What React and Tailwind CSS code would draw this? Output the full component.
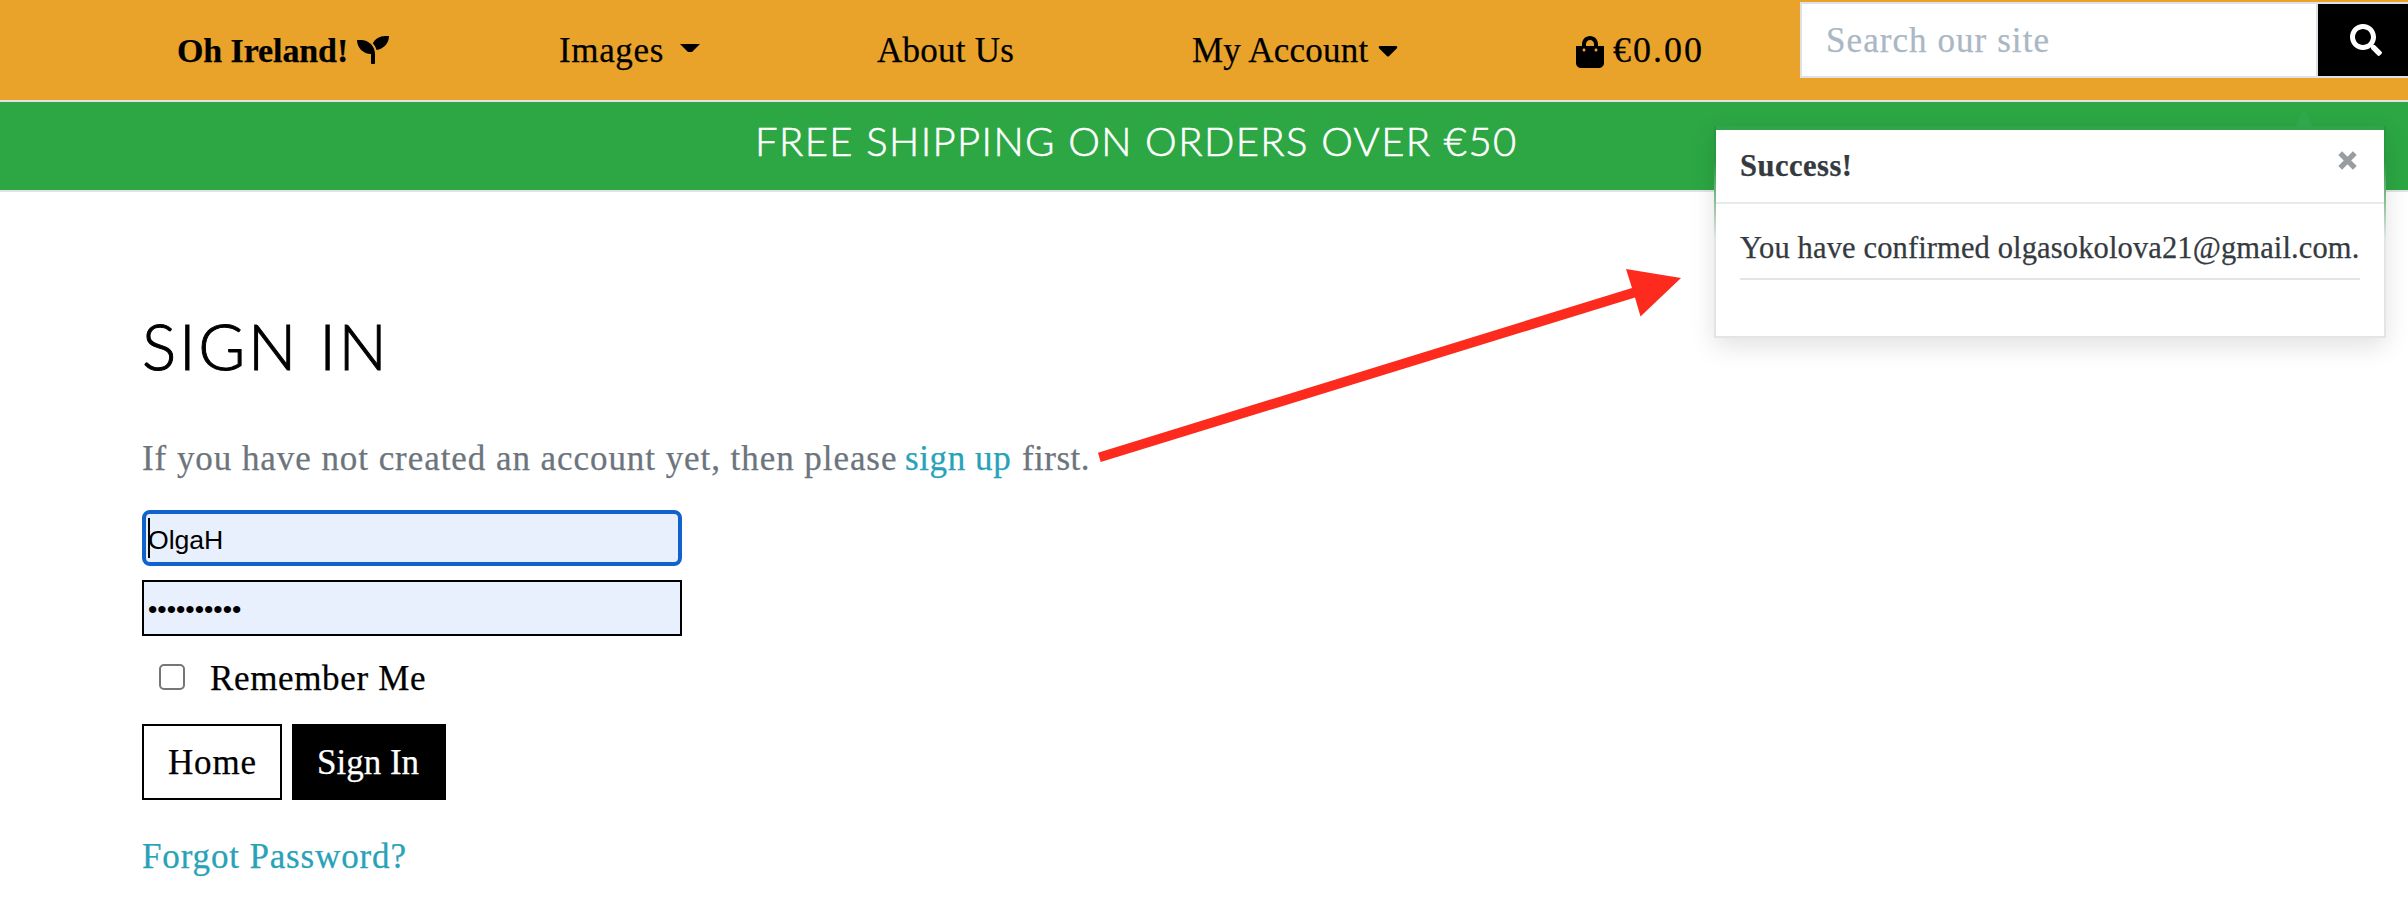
import { FaSeedling, FaShoppingBag, FaCaretDown, FaSearch } from 'react-icons/fa';

function Header() {
  return (
    <header className="flex h-[102px] border-b-2 border-[#e2e3e5] bg-[#e9a32b] text-[35px] leading-[101px] whitespace-nowrap text-black">
      <a className="ml-[177px] flex w-[180px] text-[34px] font-bold tracking-[-0.1px]">Oh Ireland!</a>
      <FaSeedling className="mt-[34px] size-8" />
      <a className="ml-[170px] w-[121px] tracking-[0.65px]">Images</a>
      <svg className="mt-[44px] h-[8px] w-[20px]" viewBox="0 0 20 8">
        <path d="M0 0H20L12 8H8Z" />
      </svg>
      <a className="ml-[177px] w-[137px] tracking-[0.25px]">About Us</a>
      <a className="ml-[178px] w-[186px] tracking-[0.25px]">My Account</a>
      <FaCaretDown className="mt-[34px] h-8 w-5" />
      <FaShoppingBag className="mt-[36px] ml-[178px] h-8 w-7" />
      <a className="ml-[9px] w-[187px] text-[36px] tracking-[2px]">€0.00</a>
      <form className="mt-[2px] flex h-[76px] flex-1 border-2 border-r-0 border-[#dee2e6]">
        <div className="w-[516px] border-r-2 border-[#dee2e6] bg-white pl-[24px] leading-[73px] tracking-[1.07px] text-[#aab7c4]">
          Search our site
        </div>
        <button type="button" aria-label="Search" className="flex flex-1 justify-start bg-black pt-[20px] pl-[32px] text-white">
          <FaSearch className="size-8" />
        </button>
      </form>
    </header>
  );
}

function Toast() {
  return (
    <div className="absolute top-[126px] left-[1714px] h-[212px] w-[672px] bg-[linear-gradient(to_bottom,#28983f_0,#28983f_36px,#e3e4e5_112px)] px-[2px] pb-[2px] leading-none text-[#343a40] shadow-[0_8px_24px_rgba(0,0,0,0.12)]">
      <svg className="absolute -top-[19px] left-[581px] h-[19px] w-[18px]" viewBox="0 0 18 19">
        <path d="M9 0L17 19H1Z" fill="#2fa74b" />
      </svg>
      <div className="h-[4px] bg-[#30a54b]" />
      <div className="flex h-[74px] justify-between border-b-2 border-[#e6ece9] bg-white pl-[24px]">
        <strong className="text-[30.5px] leading-[72px] tracking-[0.5px]">Success!</strong>
        <svg aria-label="Close" className="mt-[21px] mr-[27px] size-[19px]" viewBox="0 0 19 19">
          <path d="M2.2 2.2L16.8 16.8M16.8 2.2L2.2 16.8" stroke="#9a9da0" strokeWidth="5.4" />
        </svg>
      </div>
      <div className="h-[132px] bg-white px-[24px] pt-[22px]">
        <p className="h-[54px] border-b-2 border-[#e4e4e4] text-[30.5px] leading-[44px] tracking-[0.13px] whitespace-nowrap">
          You have confirmed olgasokolova21@gmail.com.
        </p>
      </div>
    </div>
  );
}

export default function App() {
  return (
    <div className="relative h-[912px] w-[2408px] overflow-hidden bg-white font-['Liberation_Serif',serif] [-webkit-text-stroke:0.25px]">
      <Header />
      <div className="h-[90px] border-b-2 border-[#e2e3e5] bg-[#2ca744] pl-[755px] font-['Lato',sans-serif] text-[40px] leading-[79px] font-light tracking-[1.42px] whitespace-nowrap text-white [-webkit-text-stroke:0.6px]">
        FREE SHIPPING ON ORDERS OVER €50
      </div>
      <main className="pt-[114px] pl-[142px] text-[35px] whitespace-nowrap text-black">
        <h1 className="h-[113px] font-['Lato',sans-serif] text-[64px] leading-[79px] font-light tracking-[2.7px] [-webkit-text-stroke:1px]">
          SIGN IN
        </h1>
        <p className="flex h-[91px] leading-[80px] text-[#6c757d]">
          <span className="w-[763px] tracking-[0.94px]">If you have not created an account yet, then please</span>
          <a className="w-[117px] tracking-[0.6px] text-[#27a2b9]">sign up</a>
          <span className="tracking-[0.45px]">first.</span>
        </p>
        <div className="flex h-[56px] w-[540px] rounded-[8px] border-4 border-[#1062cc] bg-[#e8effd] pl-[2px] font-['Liberation_Sans',sans-serif] text-[26.67px] leading-[53px] [-webkit-text-stroke:0]">
          <span className="mt-[4px] h-[40px] w-[2px] bg-black" />
          <span className="-ml-[2px] tracking-[-0.1px]">OlgaH</span>
        </div>
        <div className="mt-[14px] h-[56px] w-[540px] border-2 border-black bg-[#e8effd] pl-[4px] font-['Liberation_Sans',sans-serif] text-[26.67px] leading-[55px] [-webkit-text-stroke:0]">
          ••••••••••
        </div>
        <label className="flex h-[88px] pt-[28px] pl-[17px] leading-[30px]">
          <span className="size-[26px] rounded-[5px] border-2 border-[#767676] bg-white" />
          <span className="ml-[25px] tracking-[0.65px]">Remember Me</span>
        </label>
        <div className="flex gap-[10px] leading-[73px]">
          <a className="h-[76px] w-[140px] border-2 border-black pl-[24px] tracking-[0.8px]">Home</a>
          <button type="button" className="h-[76px] w-[154px] bg-black pt-[1px] pl-[25px] text-left text-white">Sign In</button>
        </div>
        <a className="mt-[17px] block leading-[80px] tracking-[0.85px] text-[#27a2b9]">Forgot Password?</a>
      </main>
      <Toast />
      <svg className="absolute top-[260px] left-[1090px] h-[210px] w-[600px]" viewBox="1090 260 600 210">
        <path d="M1098 452.8L1632 288L1626 269L1681 278L1640.5 316.5L1635 297.5L1100.7 462Z" fill="#fd2b1d" />
      </svg>
    </div>
  );
}
